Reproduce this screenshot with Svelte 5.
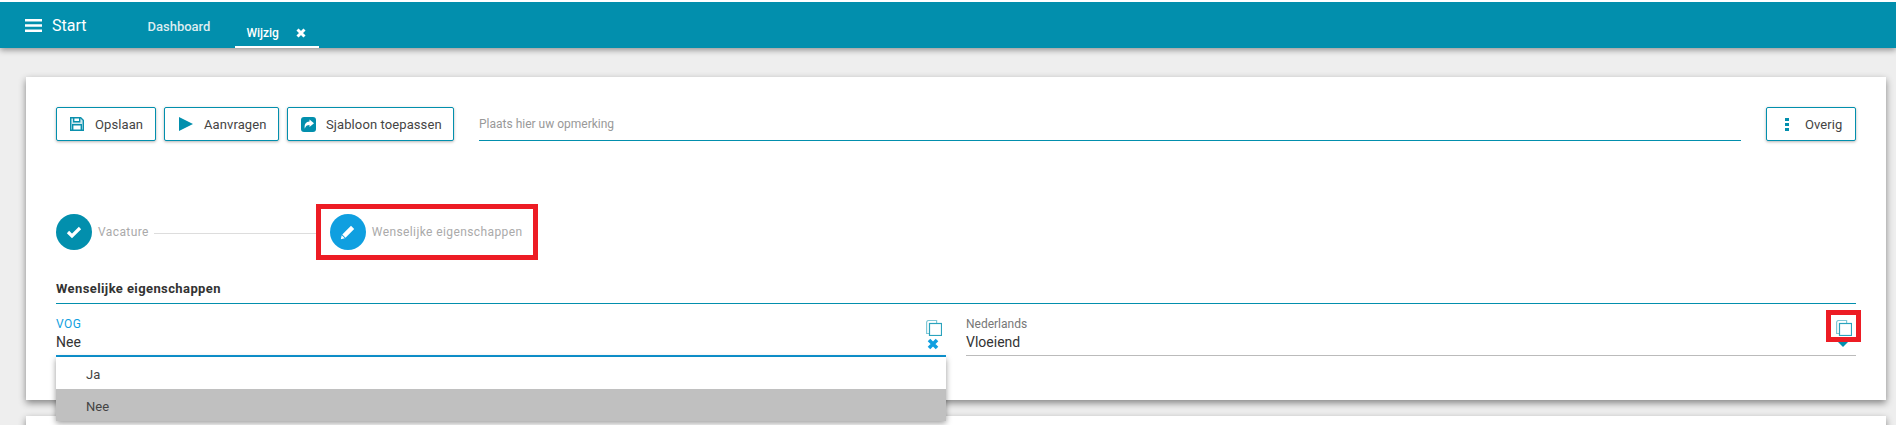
<script>
  let remark = "";
  const options = ["Ja", "Nee"];
  const selected = "Nee";
</script>

<div class="page">
  <header class="topbar">
    <button class="start">
      <svg class="burger" viewBox="0 0 17 13"><path d="M0 0h17v2.6H0zM0 5.2h17v2.6H0zM0 10.4h17V13H0z" fill="#fff" /></svg>
      <span>Start</span>
    </button>
    <nav class="tabs">
      <span class="tab">Dashboard</span>
      <span class="tab active">
        Wijzig
        <svg class="tab-close" viewBox="0 0 10 10"><path d="M1.5 1.5l7 7M8.500 1.500l-7 7" stroke="#fff" stroke-width="3" /></svg>
      </span>
    </nav>
  </header>

  <main class="content">
    <section class="card">
      <div class="toolbar">
        <button class="btn first">
          <svg class="ico" viewBox="0 0 14 14" fill="none" stroke="#0b90ad" stroke-width="1.400"><path d="M.7.700h10l2.600 2.600v10H.7z" fill="#cfe8ee" /><path d="M3.700.700v4h6v-4z" fill="#fff" /><path d="M2.700 13.300v-5.500h8.600v5.500z" fill="#fff" /></svg>
          Opslaan
        </button>
        <button class="btn second">
          <svg class="ico play" viewBox="0 0 14 14"><path d="M0 0l14 7-14 7z" fill="#028fad" /></svg>
          Aanvragen
        </button>
        <button class="btn third">
          <svg class="ico share" viewBox="0 0 15 15"><rect width="15" height="15" rx="3" fill="#028fad" /><path d="M8.500 2.500l4.500 3.800-4.500 3.800V8C6 8 4.600 8.800 3.800 11.800 3 7.500 5 4.800 8.500 4.600z" fill="#fff" /></svg>
          Sjabloon toepassen
        </button>
        <input class="remark" placeholder="Plaats hier uw opmerking" bind:value={remark} />
        <button class="btn other">
          <svg class="dots" viewBox="0 0 4 13"><path d="M0 0h4v3H0zM0 5h4v3H0zM0 10h4v3H0z" fill="#028fad" /></svg>
          Overig
        </button>
      </div>

      <div class="stepper">
        <span class="circle done">
          <svg viewBox="0 0 16 13"><path d="M2 6.500l4 4 8-8" fill="none" stroke="#fff" stroke-width="3.200" /></svg>
        </span>
        <span class="step-label">Vacature</span>
        <span class="step-line"></span>
        <span class="circle current">
          <svg viewBox="0 0 16 16"><path d="M11 1.800l3.200 3.200-8.700 8.700-3.200-3.200zM1.700 11.200l3.100 3.100-4 .9z" fill="#fff" /></svg>
        </span>
        <span class="step-label">Wenselijke eigenschappen</span>
        <span class="mark mark-step"></span>
      </div>

      <h2 class="section-title">Wenselijke eigenschappen</h2>

      <div class="fields">
        <div class="field open">
          <span class="field-label">VOG</span>
          <span class="field-value">Nee</span>
          <svg class="copy" viewBox="0 0 16 16" fill="none" stroke="#2ba3bd" stroke-width="1.200"><path d="M3 13.500H.6V2.500a2 2 0 0 1 2-2h8v2.500" opacity=".6" /><rect x="3.500" y="3.500" width="12" height="12" /></svg>
          <svg class="clear" viewBox="0 0 12 12"><path d="M2 2l8 8M10 2l-8 8" stroke="#0f9fe0" stroke-width="3.600" /></svg>
          <ul class="menu">
            {#each options as option}
              <li class:selected={option === selected}>{option}</li>
            {/each}
          </ul>
        </div>
        <div class="field">
          <span class="field-label">Nederlands</span>
          <span class="field-value">Vloeiend</span>
          <svg class="copy" viewBox="0 0 16 16" fill="none" stroke="#2ba3bd" stroke-width="1.200"><path d="M3 13.500H.6V2.500a2 2 0 0 1 2-2h8v2.500" opacity=".6" /><rect x="3.500" y="3.500" width="12" height="12" /></svg>
          <span class="arrow"></span>
          <span class="mark mark-copy"></span>
        </div>
      </div>
    </section>
    <section class="card next"></section>
  </main>
</div>

<style>
  :global(body) {
    margin: 0;
    background: #eeeeee;
    overflow: hidden;
  }
  .page {
    height: 425px;
    overflow: hidden;
    font-family: Roboto, "Liberation Sans", sans-serif;
    color: #333;
    border-top: 2px solid #fff;
    box-sizing: border-box;
  }
  .topbar {
    height: 46px;
    background: #028fad;
    box-shadow: 0 2px 6px rgba(0, 0, 0, 0.4);
    display: flex;
    padding-left: 25px;
    color: #fff;
  }
  .start {
    display: flex;
    align-items: center;
    gap: 10px;
    height: 46px;
    padding: 0;
    border: 0;
    background: none;
    color: #fff;
    font: 16px Roboto, sans-serif;
  }
  .burger {
    width: 17px;
    height: 13px;
  }
  .tabs {
    display: flex;
    margin-left: 61px;
  }
  .tab {
    font-size: 13px;
    font-weight: 500;
    padding-top: 17px;
    color: #dcecf0;
  }
  .tab.active {
    display: flex;
    align-items: flex-start;
    gap: 17px;
    margin-left: 25px;
    width: 84px;
    box-sizing: border-box;
    padding: 24px 0 0 11px;
    font-size: 12px;
    color: #fff;
    border-bottom: 2px solid #fff;
    height: 46px;
  }
  .tab-close {
    width: 10px;
    height: 10px;
    margin-top: 2px;
  }
  .content {
    padding: 29px 10px 0 26px;
  }
  .card {
    position: relative;
    height: 323px;
    box-sizing: border-box;
    background: #fff;
    padding: 30px 30px 0;
    box-shadow: 0 3px 7px rgba(0, 0, 0, 0.45);
  }
  .card.next {
    margin-top: 16px;
    height: 40px;
  }
  .toolbar {
    display: flex;
    align-items: flex-start;
    height: 34px;
  }
  .btn {
    display: flex;
    align-items: center;
    height: 34px;
    box-sizing: border-box;
    background: #fff;
    border: 1px solid #028fad;
    border-radius: 2px;
    box-shadow: 0 1px 3px rgba(0, 0, 0, 0.3);
    font: 13px Roboto, sans-serif;
    letter-spacing: 0.1px;
    color: #444;
    padding: 0;
    white-space: nowrap;
  }
  .first {
    width: 100px;
    padding-left: 13px;
    gap: 11px;
  }
  .second {
    width: 115px;
    margin-left: 8px;
    padding-left: 14px;
    gap: 11px;
  }
  .third {
    width: 167px;
    margin-left: 8px;
    padding-left: 13px;
    gap: 10px;
  }
  .ico {
    width: 14px;
    height: 14px;
    flex: none;
  }
  .share {
    width: 15px;
    height: 15px;
  }
  .remark {
    flex: 1;
    margin: 0 25px;
    height: 34px;
    box-sizing: border-box;
    border: 0;
    border-bottom: 1px solid #028fad;
    outline: none;
    padding: 0;
    font: 12px Roboto, sans-serif;
  }
  .remark::placeholder {
    color: #999;
  }
  .other {
    width: 90px;
    padding-left: 18px;
    gap: 16px;
  }
  .dots {
    width: 4px;
    height: 13px;
  }
  .stepper {
    position: relative;
    display: flex;
    align-items: center;
    margin-top: 72px;
    height: 38px;
  }
  .circle {
    width: 36px;
    height: 36px;
    border-radius: 50%;
    display: flex;
    align-items: center;
    justify-content: center;
    flex: none;
  }
  .circle svg {
    width: 16px;
    height: 16px;
  }
  .done {
    background: #028fad;
  }
  .current {
    background: #0f9fe0;
  }
  .step-label {
    font-size: 12px;
    color: #aaa;
    margin-left: 6px;
    letter-spacing: 0.4px;
  }
  .step-line {
    width: 162px;
    height: 1px;
    background: #ddd;
    margin: 2px 14px 0 5px;
  }
  .mark {
    position: absolute;
    border: 5px solid #ed1c24;
    box-sizing: border-box;
    pointer-events: none;
  }
  .mark-step {
    left: 260px;
    top: -9px;
    width: 222px;
    height: 56px;
  }
  .section-title {
    margin: 30px 0 0;
    padding-bottom: 6px;
    font-size: 13px;
    font-weight: 700;
    line-height: 16px;
    letter-spacing: 0.4px;
    color: #333;
    border-bottom: 1px solid #028fad;
  }
  .fields {
    display: grid;
    grid-template-columns: 890px 890px;
    column-gap: 20px;
  }
  .field {
    position: relative;
    height: 52px;
    box-sizing: border-box;
    border-bottom: 1px solid #bbb;
  }
  .field.open {
    height: 53px;
    border-bottom: 2px solid #0f97d5;
  }
  .field-label {
    position: absolute;
    left: 0;
    top: 13px;
    font-size: 12px;
    color: #777;
  }
  .open .field-label {
    color: #0f9fe0;
    letter-spacing: 0.5px;
  }
  .field-value {
    position: absolute;
    left: 0;
    top: 30px;
    font-size: 14px;
    color: #333;
  }
  .copy {
    position: absolute;
    right: 4px;
    top: 16px;
    width: 16px;
    height: 16px;
  }
  .clear {
    position: absolute;
    right: 7px;
    top: 34px;
    width: 12px;
    height: 12px;
  }
  .arrow {
    position: absolute;
    right: 8px;
    top: 38px;
    border: 5px solid transparent;
    border-top-color: #028fad;
    border-bottom: 0;
  }
  .menu {
    position: absolute;
    left: 0;
    right: 0;
    top: 53px;
    margin: 0;
    padding: 0;
    list-style: none;
    background: #fff;
    box-shadow: 0 2px 6px rgba(0, 0, 0, 0.4);
    z-index: 2;
  }
  .menu li {
    height: 32px;
    line-height: 36px;
    padding-left: 30px;
    font-size: 13px;
    color: #444;
  }
  .menu li.selected {
    background: #c0c0c0;
  }
  .mark-copy {
    right: -5px;
    top: 6px;
    width: 35px;
    height: 32px;
  }
</style>
